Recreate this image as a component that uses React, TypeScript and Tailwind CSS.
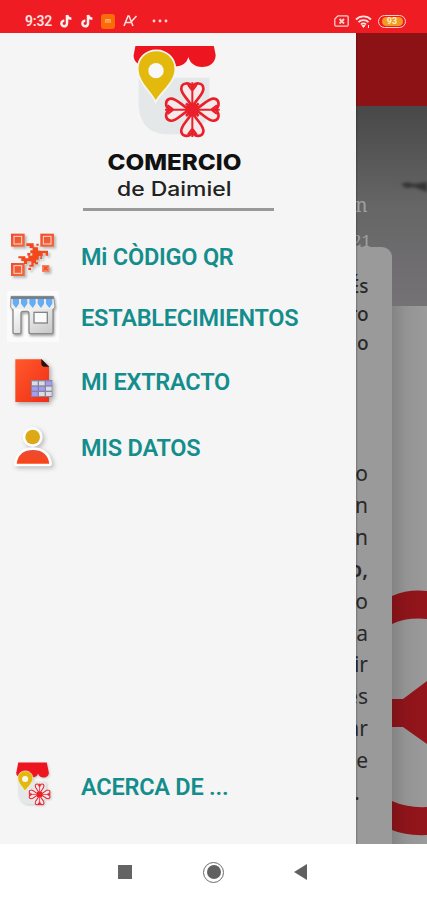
import React from "react";

const petal =
  "M0 -6 C-7 -28 -37 -48 -33 -66 C-30 -82 -9 -83 0 -68 C9 -83 30 -82 33 -66 C37 -48 7 -28 0 -6Z";

function LogoMark({ viewBox, className }: { viewBox: string; className: string }) {
  return (
    <svg viewBox={viewBox} className={className} preserveAspectRatio="none">
      <path d="M190 128H402V215C402 268 360 298 300 298H275C220 298 190 262 190 205Z" fill="#e5e8e9" />
      <path
        d="M190 -18H405L421 60C421 82 404 96 380 96C357 96 344 83 339 66C334 85 320 94 300 94C280 94 262 88 257 70C249 90 232 94 215 94C190 94 173 78 175 60Z"
        fill="#ed1620"
      />
      <path
        d="M241 201C231 174 187 143 187 102C187 70 211 46 243 46C275 46 300 70 300 102C300 143 253 174 241 201Z"
        fill="#e4b90e"
        stroke="#f7f7f2"
        strokeWidth="5"
      />
      <circle cx="242" cy="107" r="23" fill="#f8f8f8" />
      <g transform="translate(351 224)" stroke="#e9202b" strokeWidth="8" fill="#f5e9e9" strokeLinejoin="round">
        {[0, 90, 180, 270].map((a) => (
          <g key={a} transform={`rotate(${a})`}>
            <path d={petal} />
            <path d="M0 0V-82M-13 -74L0 -57L13 -74" fill="none" strokeWidth="6" />
          </g>
        ))}
        <circle r="17" fill="#e9202b" />
        <path d="M-19 -19L19 19M-19 19L19 -19" />
      </g>
    </svg>
  );
}

function TikTok() {
  return (
    <svg viewBox="0 0 12 14" className="h-[14px] w-3">
      <path d="M7 1V9.5A2.8 2.8 0 1 1 4.3 6.7M7 1C7.5 3.5 9 4.6 11.4 4.7" fill="none" stroke="#fff0ee" strokeWidth="2.5" />
    </svg>
  );
}

function StatusBar() {
  return (
    <header className="flex h-[33px] w-full items-center bg-[#ef1c24] pt-[9px] text-[#ffe3e0]">
      <span className="ml-[25px] w-[35px] text-[14px] font-semibold leading-none tracking-[-0.2px]">9:32</span>
      <TikTok />
      <span className="ml-[9px] flex"><TikTok /></span>
      <span className="ml-[8px] flex h-[15px] w-[14px] items-center justify-center rounded-[3px] bg-[#fb6b0a] text-[7px] font-bold leading-none text-[#ffc47c]">m</span>
      <svg viewBox="0 0 15 14" className="ml-[8px] h-[14px] w-[15px]">
        <path d="M1 12L5 2H6L10 12M2.5 8.5H8M8 8L13.5 2" fill="none" stroke="#ffe3e0" strokeWidth="1.5" />
      </svg>
      <svg viewBox="0 0 16 4" className="ml-[14px] h-1 w-4" fill="#ffd9d8">
        <circle cx="2" cy="2" r="1.4" /><circle cx="8" cy="2" r="1.4" /><circle cx="14" cy="2" r="1.4" />
      </svg>
      <svg viewBox="0 0 15 12" className="ml-auto h-3 w-[15px]" fill="none" stroke="#ffd0cc" strokeWidth="1.3">
        <path d="M4 .8H13A1.3 1.3 0 0 1 14.2 2V10A1.3 1.3 0 0 1 13 11.2H2A1.3 1.3 0 0 1 .8 10V4Z" />
        <path d="M5.5 4L10 8.5M10 4L5.5 8.5" strokeWidth="1.8" />
      </svg>
      <svg viewBox="0 0 17 13" className="ml-[6px] h-[13px] w-[17px]" fill="none" stroke="#ffe1de" strokeWidth="1.8">
        <path d="M1 4.5C5 .4 12 .4 16 4.5M3.5 7.2C6 4.5 11 4.5 13.5 7.2M6 9.5C7.3 8 9.7 8 11 9.5" />
        <path d="M7 10.5H10L8.5 12.5ZM13.5 10V13" fill="#ffe1de" strokeWidth="1" />
      </svg>
      <span className="ml-[6px] mr-[21px] flex h-[13px] w-[28px] items-center justify-center rounded-full border border-[#ffd0c8] p-px">
        <span className="flex h-full w-[21px] items-center justify-center rounded-full bg-[#f39b20] text-[9px] font-bold leading-none text-[#fff0c9]">93</span>
      </span>
    </header>
  );
}

function QrIcon() {
  return (
    <svg viewBox="0 0 156 150" className="mb-[5px] h-[50px] w-[52px] drop-shadow-[2px_2px_1px_#bbb]">
      <defs>
        <linearGradient id="qr" x1="0" x2="1" y1="0" y2="1"><stop stopColor="#ef4a31" /><stop offset="1" stopColor="#f26b3e" /></linearGradient>
      </defs>
      {[[12, 14], [100, 14], [12, 102]].map(([x, y]) => (
        <g key={`${x}-${y}`}>
          <rect x={x} y={y} width="41" height="39" fill="url(#qr)" />
          <rect x={x + 9} y={y + 8} width="23" height="23" fill="none" stroke="#ffd9c4" strokeWidth="3" />
        </g>
      ))}
      <path
        d="M58 43H80V55H93V65H123V80H116V72H107V81H95V92H87V102H80V113H67V107H73V97H60V105H51V96H43V88H34V82H55V88H64V80H76V73H70V64H77V57H68V51H58Z"
        fill="#f4481c"
      />
      <path d="M61 72H70V80H61ZM64 116H72V123H64ZM100 82H105V90H100ZM88 44H95V50H88ZM84 100H93V106H84Z" fill="#f4481c" />
      <rect x="105" y="108" width="22" height="21" fill="#f5865c" />
      <path d="M110 112L122 124M122 112L110 124" stroke="#ef4a31" strokeWidth="4" />
    </svg>
  );
}

function StoreIcon() {
  return (
    <span className="mb-[2px] flex h-[51px] w-[52px] bg-[#fbfbfb]">
      <svg viewBox="0 0 156 153" className="h-[51px] w-[52px] drop-shadow-[1px_2px_1px_#aaa]">
        <defs>
          <linearGradient id="wall" x1="0" x2="1" y1="0" y2="1"><stop stopColor="#fff" /><stop offset="1" stopColor="#c6c6c6" /></linearGradient>
        </defs>
        <path
          d="M18 50H138V124Q138 128 134 128H72Q66 128 66 122V68Q66 61 60 61H48Q42 61 42 68V124Q42 128 38 128H22Q18 128 18 124Z"
          fill="url(#wall)"
          stroke="#8b8b8b"
          strokeWidth="4"
        />
        <rect x="81" y="64" width="40" height="32" fill="#fafafa" stroke="#858585" strokeWidth="4" />
        <path d="M12 16H140L144 49L138 54H17L11 49Z" fill="#eee" />
        <path d="M17 54L11 49L12 16H140L144 49L138 54" fill="none" stroke="#999" strokeWidth="3" />
        <path d="M12 16H140V24H12Z" fill="#777f87" />
        {[17, 42, 67, 92, 117].map((x) => (
          <path key={x} d={`M${x} 24H${x + 19}V38L${x + 10} 51L${x} 38Z`} fill="#65adf5" />
        ))}
      </svg>
    </span>
  );
}

function ExtractIcon() {
  return (
    <svg viewBox="0 0 156 150" className="mb-[2px] h-[50px] w-[52px] drop-shadow-[2px_2px_2px_#aaa]">
      <defs>
        <linearGradient id="sheet" x1="0" x2="1" y1="0" y2="1"><stop stopColor="#ff5a2a" /><stop offset="1" stopColor="#f12d18" /></linearGradient>
      </defs>
      <path d="M25 10H104L126 31V138H25Z" fill="url(#sheet)" />
      <path d="M103 9L126 32H110Q103 31 103 24Z" fill="#21130f" />
      <rect x="72" y="72" width="64" height="51" fill="#85869b" />
      {[0, 1, 2].map((r) =>
        [0, 1, 2].map((c) => (
          <rect key={`${r}${c}`} x={75 + c * 21} y={76 + r * 16} width="17" height="12" fill={(r === 0 && c === 2) || (r > 0 && c === 0) || (r === 1 && c === 1) ? "#a49bf4" : "#dcdce5"} />
        ))
      )}
    </svg>
  );
}

function PersonIcon() {
  return (
    <svg viewBox="0 0 156 150" className="ml-px mt-px h-[50px] w-[52px] drop-shadow-[2px_2px_2px_#bbb]">
      <defs>
        <linearGradient id="body" x1="0" x2="0" y1="0" y2="1"><stop stopColor="#e94c38" /><stop offset="1" stopColor="#fb4516" /></linearGradient>
      </defs>
      <g stroke="#fff" strokeWidth="16" strokeLinejoin="round" fill="#fff">
        <circle cx="74" cy="39" r="22" />
        <path d="M26 119C29 91 49 78 75 78C101 78 120 91 124 119Z" />
      </g>
      <circle cx="74" cy="39" r="22" fill="#dda918" />
      <path d="M26 119C29 91 49 78 75 78C101 78 120 91 124 119Z" fill="url(#body)" />
    </svg>
  );
}

function MenuItem({ icon, label, className }: { icon: React.ReactNode; label: string; className: string }) {
  return (
    <a className={`flex shrink-0 items-center pl-[7px] ${className}`}>
      <span className="flex w-[74px]">{icon}</span>
      <span className="whitespace-nowrap pt-[2px] text-[23.5px] font-semibold leading-none tracking-[-0.23px] text-[#148d8d]">{label}</span>
    </a>
  );
}

function Drawer() {
  return (
    <aside className="flex h-full w-[356px] shrink-0 flex-col bg-[#f5f5f5]">
      <div className="flex h-[192px] shrink-0 flex-col pt-[13px]">
        <LogoMark viewBox="173 33 264 279" className="ml-[133px] h-[93px] w-[88px]" />
        <svg className="ml-[83px] h-[69px] w-[191px]" viewBox="83 139 191 69">
          <text x="107.5" y="170" textLength="134" lengthAdjust="spacingAndGlyphs" fontFamily="Inter, sans-serif" fontWeight="800" fontSize="22" fill="#111">COMERCIO</text>
          <text x="117" y="196" textLength="114.5" lengthAdjust="spacingAndGlyphs" fontFamily="Inter, sans-serif" fontWeight="500" fontSize="19.5" fill="#222">de Daimiel</text>
        </svg>
        <div className="ml-[83px] h-[3px] w-[191px] bg-[#999]" />
      </div>
      <nav className="flex flex-1 flex-col">
        <MenuItem className="h-[63px]" icon={<QrIcon />} label="Mi CÒDIGO QR" />
        <MenuItem className="h-[59px]" icon={<StoreIcon />} label="ESTABLECIMIENTOS" />
        <MenuItem className="h-[70px]" icon={<ExtractIcon />} label="MI EXTRACTO" />
        <MenuItem className="h-[62px]" icon={<PersonIcon />} label="MIS DATOS" />
        <MenuItem
          className="mb-[24px] mt-auto h-[66px]"
          icon={<LogoMark viewBox="173 -22 264 334" className="mb-[6px] ml-[9px] h-[44px] w-[35px] drop-shadow-[1px_1px_1px_#ccc]" />}
          label="ACERCA DE ..."
        />
      </nav>
    </aside>
  );
}

function DimmedPage() {
  const lines = ["o", "n", "n", "o,", "o", "a", "ir", "es", "ar", "e", "."];
  return (
    <main className="relative flex h-full flex-1 flex-col overflow-hidden bg-[#9b9b9b]">
      <div className="h-[73px] shrink-0 bg-[#8d1216]" />
      <div className="flex h-[200px] shrink-0 flex-col bg-gradient-to-b from-[#484848] via-[#666] to-[#757276] font-['Noto_Serif','Liberation_Serif',serif] text-[19px] leading-[36px] text-[#a0a0a0]">
        <svg viewBox="0 0 26 20" className="ml-auto mt-[69px] h-5 w-[26px] blur-[1.5px]">
          <path d="M0 9Q6 6 13 9L26 7V17L13 12L5 13Z" fill="#343436" />
        </svg>
        <div className="-mt-[8px] flex w-[11.5px] justify-end">n</div>
        <div className="flex w-[15px] justify-end text-[17px]">21</div>
      </div>
      <svg viewBox="0 0 35 254" className="ml-auto mt-[284px] h-[254px] w-[35px]" fill="#94151b">
        <path d="M0 6Q16 -1 35 1V29Q15 27 0 34Z" />
        <path d="M0 109H11L35 91V154L11 137H0Z" />
        <path d="M0 211Q15 218 35 217V245Q14 246 0 240Z" />
      </svg>
      <div className="absolute inset-y-0 right-0 mt-[273px] w-[35px] bg-gradient-to-r from-black/15 via-black/5 via-40% to-transparent" />
      <section className="absolute bottom-0 left-0 top-[214px] w-[36px] overflow-hidden rounded-tr-[10px] bg-[#9a9a9a] font-['Noto_Sans',sans-serif] text-[#292929]">
        <div className="flex w-[12.5px] flex-col items-end pt-[24.5px] text-[19px] font-medium leading-[28.5px]">
          <span>És</span><span>ro</span><span>o</span>
        </div>
        <div className="mt-[101px] flex w-[12px] flex-col items-end text-[21px] leading-[31.9px]">
          {lines.map((line, i) => (
            <span key={i} className={i === 3 ? "font-semibold" : i === 10 ? "mr-[8px]" : ""}>{line}</span>
          ))}
        </div>
      </section>
      <div className="absolute inset-y-0 left-0 w-[2px] bg-gradient-to-r from-black/25 to-transparent" />
    </main>
  );
}

export default function App() {
  return (
    <div className="flex h-[900px] w-[427px] flex-col overflow-hidden bg-white font-['Roboto',sans-serif]">
      <StatusBar />
      <div className="flex h-[811px] w-full">
        <Drawer />
        <DimmedPage />
      </div>
      <footer className="flex h-[56px] items-center pl-[118px]">
        <span className="h-[14px] w-[14px] bg-[#646464]" />
        <span className="ml-[71px] flex h-[21px] w-[21px] items-center justify-center rounded-full border-[1.5px] border-[#6a6a6a]">
          <span className="h-[14px] w-[14px] rounded-full bg-[#606060]" />
        </span>
        <svg viewBox="0 0 14 16" className="ml-[70px] h-4 w-[14px]"><path d="M0 8L13 0V16Z" fill="#606060" /></svg>
      </footer>
    </div>
  );
}
